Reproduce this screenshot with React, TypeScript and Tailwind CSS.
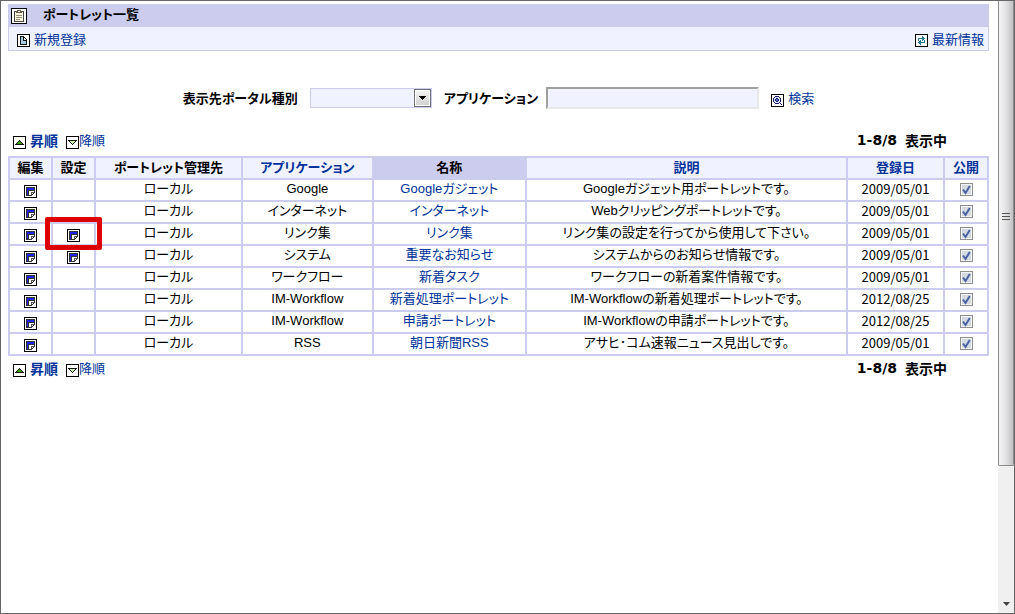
import { ReactNode } from "react";

interface Portlet {
  app: string;
  name: string;
  description: string;
  date: string;
  configurable?: boolean;
  highlighted?: boolean;
}

const PORTLETS: Portlet[] = [
  { app: "Google", name: "Googleガジェット", description: "Googleガジェット用ポートレットです。", date: "2009/05/01" },
  { app: "インターネット", name: "インターネット", description: "Webクリッピングポートレットです。", date: "2009/05/01" },
  { app: "リンク集", name: "リンク集", description: "リンク集の設定を行ってから使用して下さい。", date: "2009/05/01", configurable: true, highlighted: true },
  { app: "システム", name: "重要なお知らせ", description: "システムからのお知らせ情報です。", date: "2009/05/01", configurable: true },
  { app: "ワークフロー", name: "新着タスク", description: "ワークフローの新着案件情報です。", date: "2009/05/01" },
  { app: "IM-Workflow", name: "新着処理ポートレット", description: "IM-Workflowの新着処理ポートレットです。", date: "2012/08/25" },
  { app: "IM-Workflow", name: "申請ポートレット", description: "IM-Workflowの申請ポートレットです。", date: "2012/08/25" },
  { app: "RSS", name: "朝日新聞RSS", description: "アサヒ･コム速報ニュース見出しです。", date: "2009/05/01" },
];

function IconBox({ children }: { children: ReactNode }) {
  return (
    <svg viewBox="0 0 13 13" className="block size-[13px] shrink-0" shapeRendering="crispEdges" aria-hidden="true">
      <rect x="0.5" y="0.5" width="12" height="12" fill="#fff" stroke="#000" />
      {children}
    </svg>
  );
}

function ClipboardIcon() {
  return (
    <svg viewBox="0 0 16 16" className="block size-4 shrink-0" shapeRendering="crispEdges" aria-hidden="true">
      <rect x="0.5" y="0.5" width="15" height="15" fill="#fff" stroke="#000" />
      <rect x="3.5" y="3.5" width="9" height="10" fill="#fff7e0" stroke="#444" />
      <path d="M6 2h4v1h1v2H5V3h1z" fill="#665c48" />
      <path d="M7 3h2v1H7z" fill="#eee" />
      <path d="M5 7h6M5 9h6M5 11h4" transform="translate(0 .5)" stroke="#998c75" />
    </svg>
  );
}

function NewIcon() {
  return (
    <IconBox>
      <path d="M3 2h4v1h1v1h1v1h1v6H3z" fill="#111" />
      <path d="M4 3h2v4h3v3H4z" fill="#a9cde0" />
      <path d="M7 4h1v1h1v1H7z" fill="#fff" />
    </IconBox>
  );
}

function RefreshIcon() {
  return (
    <IconBox>
      <path d="M3 4h4V2h1v1h1v1h1v1H9v1H8v1H7V5H4v2H3z" fill="#1c7897" />
      <path d="M10 9H6v2H5v-1H4V9H3V8h1V7h1V6h1v2h3V6h1z" fill="#1c7897" />
    </IconBox>
  );
}

function SearchIcon() {
  return (
    <IconBox>
      <path d="M4 2h4v1h1v1h1v4H9v1H8v1H4V9H3V8H2V4h1V3h1z" fill="#171768" />
      <path d="M4 3h4v1h1v4H8v1H4V8H3V4h1z" fill="#dce5ff" />
      <path d="M5 4h2v1h1v2H7v1H5V7H4V5h1z" fill="#171768" />
      <path d="M5 5h2v2H5z" fill="#5c6bc0" />
      <path d="M8 8h1v1h1v1h1v1h-1v-1H9V9H8z" fill="#171768" />
    </IconBox>
  );
}

function AscIcon() {
  return (
    <IconBox>
      <path d="M6 4h1v1h1v1h1v1h1v1h1v1H2V8h1V7h1V6h1V5h1z" fill="#111" />
      <path d="M6 5h1v1h1v1h1v1H4V7h1V6h1z" fill="#38a000" />
    </IconBox>
  );
}

function DescIcon() {
  return (
    <IconBox>
      <path d="M2 4h9v1h-1v1H9v1H8v1H7v1H6V8H5V7H4V6H3V5H2z" fill="#111" />
      <path d="M4 5h5v1H8v1H7v1H6V7H5V6H4z" fill="#c7f5a0" />
    </IconBox>
  );
}

function EditIcon() {
  return (
    <IconBox>
      <path d="M2 2h9v6h-1v1H9v1H8v1H2z" fill="#333" />
      <path d="M3 3h7v2H3z" fill="#2222ee" />
      <path d="M3 5h1v5H3z" fill="#2222ee" />
      <path d="M5 6h5v2H9v1H8v1H5z" fill="#fff" />
      <path d="M7 7h3v1H8v2H7z" fill="#555" />
    </IconBox>
  );
}

function EditButton({ label }: { label: string }) {
  return (
    <button type="button" aria-label={label} className="mx-auto block">
      <EditIcon />
    </button>
  );
}

function PublicCheckbox({ name }: { name: string }) {
  return (
    <label className="relative mx-auto block size-[13px]">
      <input
        type="checkbox"
        defaultChecked
        aria-label={`${name} 公開`}
        className="peer block size-[13px] appearance-none border border-[#8e8f8f] bg-[#d5d9e0] shadow-[inset_0_0_0_1px_#f4f4f4]"
      />
      <svg viewBox="0 0 13 13" className="pointer-events-none absolute inset-0 hidden size-[13px] peer-checked:block" aria-hidden="true">
        <path d="M3 6.5 5.5 10 9.8 3" fill="none" stroke="#4a62a3" strokeWidth="2" />
      </svg>
    </label>
  );
}

function SortBar() {
  return (
    <div className="flex h-5 items-center justify-between pr-[42px] pl-[5px]">
      <div className="flex items-center">
        <a href="#asc" className="flex items-center gap-1 text-sm leading-5 font-bold text-[#003399]">
          <span className="pt-1"><AscIcon /></span>
          昇順
        </a>
        <a href="#desc" className="ml-2 flex items-center text-[#003399]">
          <span className="pt-1"><DescIcon /></span>
          降順
        </a>
      </div>
      <div className="flex gap-2 text-sm leading-5 font-bold">
        <span className="font-['DejaVu_Sans',sans-serif]">1-8/8</span>
        <span>表示中</span>
      </div>
    </div>
  );
}

function HeadCell({ children, href, active }: { children: ReactNode; href?: string; active?: boolean }) {
  return (
    <th scope="col" className={`h-[22px] border-2 border-[#ccccee] p-0 pb-0.5 font-bold ${active ? "bg-[#ccccee]" : "bg-[#f0f2ff]"}`}>
      {href ? <a href={href} className="text-[#003399]">{children}</a> : children}
    </th>
  );
}

function Cell({ children, className = "pb-0.5" }: { children?: ReactNode; className?: string }) {
  return <td className={`h-[22px] border-2 border-[#ccccee] px-0 ${className}`}>{children}</td>;
}

function PortletTable() {
  return (
    <table className="w-full table-fixed border-collapse text-center leading-[18px]">
      <colgroup>
        <col className="w-[43px]" />
        <col className="w-[43px]" />
        <col className="w-[15%]" />
        <col className="w-[131px]" />
        <col className="w-[153px]" />
        <col />
        <col className="w-[97px]" />
        <col className="w-[44px]" />
      </colgroup>
      <thead>
        <tr>
          <HeadCell>編集</HeadCell>
          <HeadCell>設定</HeadCell>
          <HeadCell>ポートレット管理先</HeadCell>
          <HeadCell href="#app">アプリケーション</HeadCell>
          <HeadCell active>名称</HeadCell>
          <HeadCell href="#description">説明</HeadCell>
          <HeadCell href="#date">登録日</HeadCell>
          <HeadCell href="#public">公開</HeadCell>
        </tr>
      </thead>
      <tbody className="font-['Liberation_Sans','Noto_Sans_CJK_JP',sans-serif]">
        {PORTLETS.map((p) => (
          <tr key={p.name} className="align-middle">
            <Cell className="pt-0.5"><EditButton label={`${p.name} 編集`} /></Cell>
            <Cell className="pt-0.5">
              {p.configurable && (
                <div className="relative">
                  <EditButton label={`${p.name} 設定`} />
                  {p.highlighted && (
                    <div className="pointer-events-none absolute -inset-x-2 -top-3 -bottom-2 rounded-xs border-5 border-[#dd0000]" />
                  )}
                </div>
              )}
            </Cell>
            <Cell>ローカル</Cell>
            <Cell>{p.app}</Cell>
            <Cell><a href="#portlet" className="text-[#003399]">{p.name}</a></Cell>
            <Cell>{p.description}</Cell>
            <Cell className="pb-0.5 font-['Noto_Sans_CJK_JP',sans-serif]">{p.date}</Cell>
            <Cell><PublicCheckbox name={p.name} /></Cell>
          </tr>
        ))}
      </tbody>
    </table>
  );
}

function SearchForm() {
  return (
    <form className="mt-[35px] flex h-6 items-center justify-center">
      <label htmlFor="portal" className="font-bold">表示先ポータル種別</label>
      <div className="relative ml-3 w-[122px]">
        <select id="portal" className="block h-5 w-full appearance-none border border-[#ccccee] bg-[#f0f2ff]">
          <option value=""></option>
        </select>
        <span className="pointer-events-none absolute top-px right-px flex h-[18px] w-[17px] items-center justify-center border border-[#707070] bg-linear-to-b from-[#f4f4f4] to-[#d0d0d0] shadow-[inset_0_0_0_1px_#fff]">
          <svg viewBox="0 0 7 4" className="h-1 w-[7px]" shapeRendering="crispEdges"><path d="M0 0h7v1H6v1H5v1H4v1H3V3H2V2H1V1H0z" /></svg>
        </span>
      </div>
      <label htmlFor="application" className="ml-3 font-bold">アプリケーション</label>
      <input
        id="application"
        type="text"
        className="ml-2 h-[22px] w-[213px] border-2 border-t-[#a0a0a0] border-r-[#e8e8e8] border-b-[#e8e8e8] border-l-[#a0a0a0] bg-[#f0f2ff] px-1"
      />
      <a href="#search" className="ml-3 flex items-center gap-1 text-[#003399]">
        <span className="pt-1"><SearchIcon /></span>
        検索
      </a>
    </form>
  );
}

function ScrollBar() {
  return (
    <div className="flex w-4 shrink-0 flex-col bg-[#f0f0f0]" aria-hidden="true">
      <div className="flex h-[76%] flex-col items-center justify-center rounded-b-xs border border-t-0 border-[#8a8a8a] bg-linear-to-r from-[#f5f5f5] via-[#e2e2e4] to-[#c2c2c5] pb-8">
        <svg viewBox="0 0 8 8" className="size-2" shapeRendering="crispEdges">
          <path d="M0 .5h8M0 3.5h8M0 6.5h8" stroke="#555" />
        </svg>
      </div>
      <div className="flex flex-1 items-end justify-center pb-[7px]">
        <svg viewBox="0 0 7 4" className="h-1 w-[7px]"><path d="M0 0h7L3.5 4z" fill="#444" /></svg>
      </div>
    </div>
  );
}

export default function App() {
  return (
    <div className="flex min-h-screen border border-[#666] bg-white font-['MS_UI_Gothic','Noto_Sans_CJK_JP',sans-serif] text-[13px] leading-5 text-black [font-feature-settings:'palt']">
      <main className="min-w-0 flex-1 pt-[3px] pr-[9px] pl-[7px]">
        <header>
          <div className="flex h-[23px] gap-4 bg-[#ccccee] pl-[3px]">
            <span className="pt-1"><ClipboardIcon /></span>
            <h1 className="font-bold">ポートレット一覧</h1>
          </div>
          <div className="flex h-6 items-center justify-between border border-t-0 border-[#ccccee] bg-[#f0f2ff] pr-1 pl-2">
            <a href="#new" className="flex items-center gap-1 text-[#003399]">
              <span className="pt-1"><NewIcon /></span>
              新規登録
            </a>
            <a href="#refresh" className="flex items-center gap-1 text-[#003399]">
              <span className="pt-1"><RefreshIcon /></span>
              最新情報
            </a>
          </div>
        </header>
        <SearchForm />
        <div className="mt-5">
          <SortBar />
          <div className="mt-1.5 mb-0.5"><PortletTable /></div>
          <SortBar />
        </div>
      </main>
      <ScrollBar />
    </div>
  );
}
